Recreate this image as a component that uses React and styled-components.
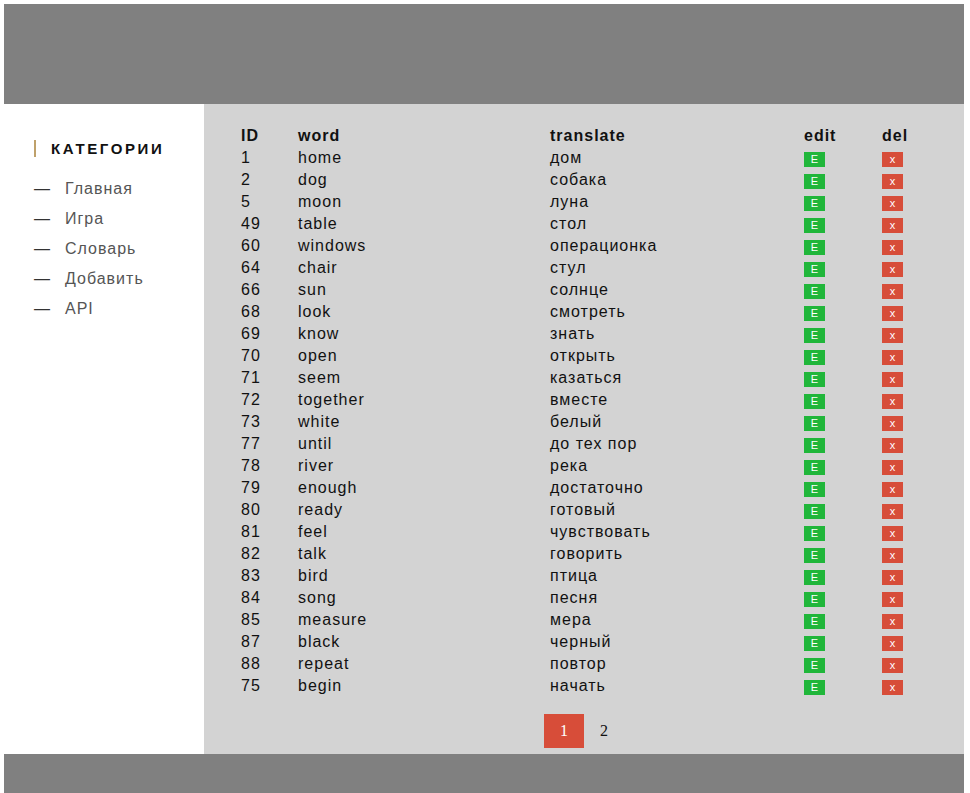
import React from "react";
import styled, {createGlobalStyle} from "styled-components";

const GlobalStyle = createGlobalStyle`
  body {
    margin: 4px;
    font-family: "Liberation Sans", Arial, sans-serif;
    color: #111;
  }
`;

// region layout
const Page = styled.div`
  width: 960px;
  display: flex;
  flex-direction: column;
`;

const Header = styled.header`
  height: 100px;
  background: #808080;
`;

const Footer = styled.footer`
  height: 39px;
  background: #808080;
`;

const Main = styled.div`
  display: flex;
`;

const Sidebar = styled.aside`
  width: 200px;
  flex-shrink: 0;
  background: #fff;
  padding: 36px 0 0 30px;
  box-sizing: border-box;
`;

const SideTitle = styled.h3`
  margin: 0 0 17px;
  border-left: 2px solid #bfa16b;
  padding-left: 15px;
  font-size: 15px;
  line-height: 17px;
  font-weight: bold;
  letter-spacing: 2.6px;
  text-transform: uppercase;
  color: #111;
`;

const Menu = styled.ul`
  list-style: none;
  margin: 0;
  padding: 0;
`;

const MenuItem = styled.li`
  display: flex;
  font-size: 16px;
  line-height: 30px;
  letter-spacing: 1px;
  color: #555;
`;

const Dash = styled.span`
  width: 31px;
  color: #333;
  letter-spacing: 0;
`;

const Content = styled.section`
  flex: 1;
  background: #d3d3d3;
  padding: 21px 0 6px 37px;
  display: flex;
  flex-direction: column;
`;
// endregion

// region table
const Row = styled.div`
  display: grid;
  grid-template-columns: 57px 252px 254px 78px 1fr;
  height: 22px;
  font-size: 16px;
  line-height: 22px;
  letter-spacing: 1px;
  font-weight: ${({head}) => head ? "bold" : "normal"};
`;

const Btn = styled.span`
  width: 21px;
  height: 15px;
  margin-top: 5px;
  display: flex;
  align-items: center;
  justify-content: center;
  font-size: 11px;
  line-height: 15px;
  letter-spacing: 0;
  color: #fff;
  background: ${({kind}) => kind === "del" ? "#d74d39" : "#20b63a"};
`;

const Pager = styled.div`
  display: flex;
  justify-content: center;
  margin: 17px 0 0 -37px;
`;

const PageBtn = styled.span`
  width: 40px;
  height: 34px;
  display: flex;
  align-items: center;
  justify-content: center;
  font-family: "Liberation Serif", "Times New Roman", serif;
  font-size: 16px;
  color: ${({active}) => active ? "#fff" : "#111"};
  background: ${({active}) => active ? "#d74d39" : "transparent"};
`;
// endregion

const words = [
    [1, "home", "дом"],
    [2, "dog", "собака"],
    [5, "moon", "луна"],
    [49, "table", "стол"],
    [60, "windows", "операционка"],
    [64, "chair", "стул"],
    [66, "sun", "солнце"],
    [68, "look", "смотреть"],
    [69, "know", "знать"],
    [70, "open", "открыть"],
    [71, "seem", "казаться"],
    [72, "together", "вместе"],
    [73, "white", "белый"],
    [77, "until", "до тех пор"],
    [78, "river", "река"],
    [79, "enough", "достаточно"],
    [80, "ready", "готовый"],
    [81, "feel", "чувствовать"],
    [82, "talk", "говорить"],
    [83, "bird", "птица"],
    [84, "song", "песня"],
    [85, "measure", "мера"],
    [87, "black", "черный"],
    [88, "repeat", "повтор"],
    [75, "begin", "начать"],
];

const menu = ["Главная", "Игра", "Словарь", "Добавить", "API"];

export default function App() {
    return (
        <>
            <GlobalStyle/>
            <Page>
                <Header/>
                <Main>
                    <Sidebar>
                        <SideTitle>Категории</SideTitle>
                        <Menu>
                            {menu.map(m => (
                                <MenuItem key={m}><Dash>—</Dash>{m}</MenuItem>
                            ))}
                        </Menu>
                    </Sidebar>
                    <Content>
                        <Row head>
                            <span>ID</span>
                            <span>word</span>
                            <span>translate</span>
                            <span>edit</span>
                            <span>del</span>
                        </Row>
                        {words.map(([id, word, tr]) => (
                            <Row key={id}>
                                <span>{id}</span>
                                <span>{word}</span>
                                <span>{tr}</span>
                                <span><Btn>E</Btn></span>
                                <span><Btn kind="del">x</Btn></span>
                            </Row>
                        ))}
                        <Pager>
                            <PageBtn active>1</PageBtn>
                            <PageBtn>2</PageBtn>
                        </Pager>
                    </Content>
                </Main>
                <Footer/>
            </Page>
        </>
    );
}
